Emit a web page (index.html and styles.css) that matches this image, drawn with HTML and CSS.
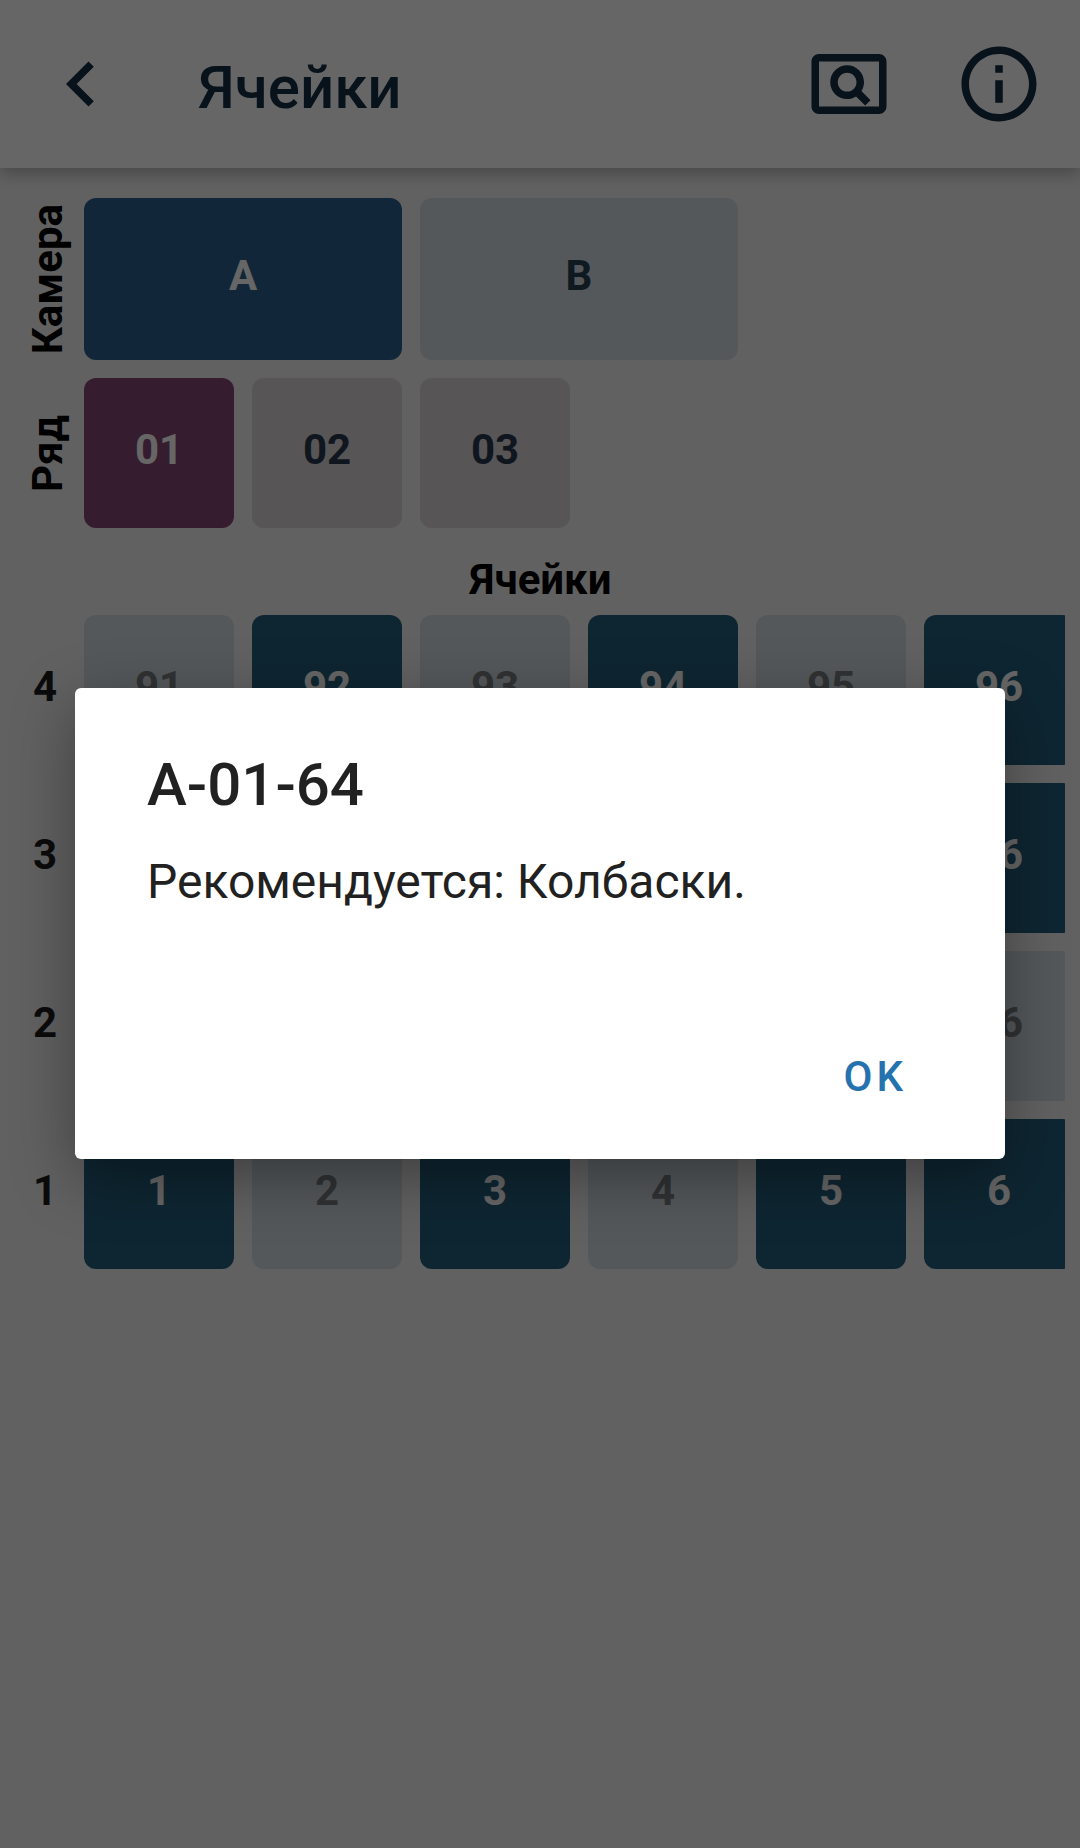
FILE: index.html
```html
<!DOCTYPE html>
<html lang="ru">
<head>
<meta charset="utf-8">
<title>Ячейки</title>
<link rel="stylesheet" href="styles.css">
</head>
<body>
<div class="app">
  <header class="bar">
    <svg class="icon" viewBox="0 0 24 24"><path d="M15.41 16.59L10.83 12l4.58-4.59L14 6l-6 6 6 6z"/></svg>
    <h1 class="bar-title">Ячейки</h1>
    <div class="actions">
      <svg class="icon" viewBox="0 0 24 24"><path d="M11.49 16c.88 0 1.7-.26 2.39-.7l2.44 2.44 1.42-1.42-2.44-2.43c.44-.7.7-1.51.7-2.39C16 9.01 13.99 7 11.5 7S7 9.01 7 11.5 9.01 16 11.49 16zm.01-7c1.38 0 2.5 1.12 2.5 2.5S12.88 14 11.5 14 9 12.88 9 11.5 10.12 9 11.5 9zM20 4H4c-1.1 0-2 .9-2 2v12c0 1.1.9 2 2 2h16c1.1 0 2-.9 2-2V6c0-1.1-.9-2-2-2zm0 14H4V6h16v12z"/></svg>
      <svg class="icon" viewBox="0 0 24 24"><path d="M11 7h2v2h-2zm0 4h2v6h-2zm1-9C6.48 2 2 6.48 2 12s4.480 10 10 10 10-4.480 10-10S17.520 2 12 2zm0 18c-4.410 0-8-3.590-8-8s3.590-8 8-8 8 3.590 8 8-3.590 8-8 8z"/></svg>
    </div>
  </header>
  <main class="content">
    <section class="line">
      <div class="side"><span class="vertical">Камера</span></div>
      <div class="tiles">
        <div class="tile chamber chamber-on">A</div>
        <div class="tile chamber">B</div>
      </div>
    </section>
    <section class="line">
      <div class="side"><span class="vertical">Ряд</span></div>
      <div class="tiles">
        <div class="tile row-on">01</div>
        <div class="tile row">02</div>
        <div class="tile row">03</div>
      </div>
    </section>
    <h2 class="heading">Ячейки</h2>
    <section class="line">
      <div class="side level">4</div>
      <div class="tiles">
        <div class="tile off">91</div><div class="tile on">92</div><div class="tile off">93</div><div class="tile on">94</div><div class="tile off">95</div><div class="tile on">96</div>
      </div>
    </section>
    <section class="line">
      <div class="side level">3</div>
      <div class="tiles">
        <div class="tile on"></div><div class="tile off"></div><div class="tile on"></div><div class="tile off"></div><div class="tile on"></div><div class="tile on">66</div>
      </div>
    </section>
    <section class="line">
      <div class="side level">2</div>
      <div class="tiles">
        <div class="tile on"></div><div class="tile off"></div><div class="tile on"></div><div class="tile off"></div><div class="tile on"></div><div class="tile off">36</div>
      </div>
    </section>
    <section class="line">
      <div class="side level">1</div>
      <div class="tiles">
        <div class="tile on">1</div><div class="tile off">2</div><div class="tile on">3</div><div class="tile off">4</div><div class="tile on">5</div><div class="tile on">6</div>
      </div>
    </section>
  </main>
</div>
<div class="scrim">
  <div class="dialog" role="dialog">
    <h2 class="dialog-title">A-01-64</h2>
    <p class="dialog-text">Рекомендуется: Колбаски.</p>
    <button class="ok">OK</button>
  </div>
</div>
</body>
</html>
```
FILE: styles.css
```css
* { box-sizing: border-box; }
body {
  margin: 0;
  font-family: Roboto, "Noto Sans", sans-serif;
  background: #f2f2f2;
}
h1, h2, p { margin: 0; }
.app {
  height: 1848px;
  overflow: hidden;
  background: #f2f2f2;
}
.bar {
  position: relative;
  display: flex;
  align-items: center;
  height: 168px;
  padding: 0 36px;
  background: #fff;
  color: #122d41;
  box-shadow: 0 6px 15px rgba(0, 0, 0, .26);
}
.icon {
  display: block;
  width: 90px;
  height: 90px;
  fill: currentColor;
}
.bar-title {
  margin-left: 72px;
  padding-top: 8px;
  font-size: 60px;
  font-weight: 500;
  line-height: 70px;
}
.actions {
  display: flex;
  gap: 60px;
  margin-left: auto;
}
.content {
  display: flex;
  flex-direction: column;
  gap: 18px;
  padding: 30px 15px 0 0;
}
.line { display: flex; }
.side {
  flex: none;
  display: flex;
  align-items: center;
  justify-content: center;
  width: 84px;
  font-size: 42px;
  font-weight: 700;
}
.vertical {
  writing-mode: vertical-rl;
  transform: rotate(180deg);
  line-height: 50px;
  margin: 1px 0 0 11px;
}
.level {
  padding: 0 0 7px 6px;
  color: #1c1c1e;
}
.tiles {
  display: flex;
  gap: 18px;
  min-width: 0;
  flex: 1;
  overflow: hidden;
}
.tile {
  flex: none;
  display: flex;
  align-items: center;
  justify-content: center;
  width: 150px;
  height: 150px;
  padding-bottom: 7px;
  border-radius: 12px;
  font-size: 42px;
  font-weight: 700;
}
.chamber {
  width: 318px;
  height: 162px;
  background: #d2dce3;
  color: #263f50;
}
.chamber-on { background: #2b5f8f; color: #fff; }
.row { background: #dcd4d7; color: #28384f; }
.row-on { background: #854673; color: #fff; }
.off { background: #d2dce3; color: #7c7d7f; }
.on { background: #255f7d; color: #fff; }
.heading {
  height: 51px;
  padding-left: 16px;
  font-size: 42px;
  font-weight: 700;
  line-height: 68px;
  text-align: center;
}
.scrim {
  position: absolute;
  inset: 0;
  height: 1848px;
  display: flex;
  align-items: center;
  justify-content: center;
  padding-bottom: 1px;
  background: rgba(0, 0, 0, .6);
}
.dialog {
  display: flex;
  flex-direction: column;
  width: 930px;
  height: 471px;
  padding: 60px 72px 52px;
  border-radius: 6px;
  background: #fff;
  color: #212121;
  box-shadow: 0 18px 62px rgba(0, 0, 0, .36);
}
.dialog-title {
  font-size: 60px;
  font-weight: 500;
  line-height: 74px;
}
.dialog-text {
  margin-top: 24px;
  font-size: 48px;
  line-height: 72px;
}
.ok {
  align-self: flex-end;
  margin: auto 26px 0 0;
  padding: 0;
  border: 0;
  background: none;
  color: #2473ae;
  font: 500 42px/60px Roboto, sans-serif;
  letter-spacing: 4px;
}
```
